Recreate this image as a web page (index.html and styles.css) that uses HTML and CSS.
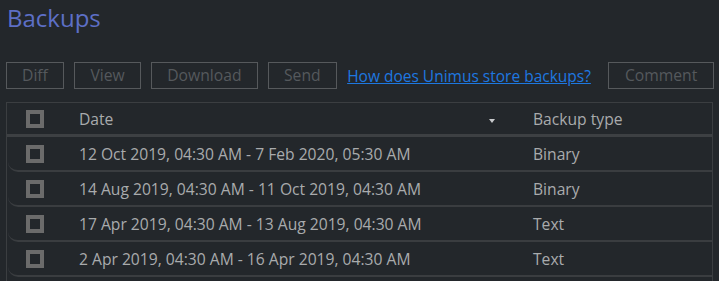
FILE: index.html
```html
<!DOCTYPE html>
<html>
<head>
<meta charset="utf-8">
<link rel="stylesheet" href="styles.css">
</head>
<body>
<div class="page">
  <h1 class="title">Backups</h1>
  <div class="toolbar">
    <button class="btn">Diff</button>
    <button class="btn">View</button>
    <button class="btn">Download</button>
    <button class="btn">Send</button>
    <a class="help" href="#">How does Unimus store backups?</a>
    <button class="btn btn-comment">Comment</button>
  </div>
  <div class="table">
    <div class="row head">
      <div class="cell cb"><span class="check"></span></div>
      <div class="cell date">Date<span class="caret"></span></div>
      <div class="cell type">Backup type</div>
    </div>
    <div class="row">
      <div class="cell cb"><span class="check"></span></div>
      <div class="cell date">12 Oct 2019, 04:30 AM - 7 Feb 2020, 05:30 AM</div>
      <div class="cell type">Binary</div>
    </div>
    <div class="row">
      <div class="cell cb"><span class="check"></span></div>
      <div class="cell date">14 Aug 2019, 04:30 AM - 11 Oct 2019, 04:30 AM</div>
      <div class="cell type">Binary</div>
    </div>
    <div class="row">
      <div class="cell cb"><span class="check"></span></div>
      <div class="cell date">17 Apr 2019, 04:30 AM - 13 Aug 2019, 04:30 AM</div>
      <div class="cell type">Text</div>
    </div>
    <div class="row">
      <div class="cell cb"><span class="check"></span></div>
      <div class="cell date">2 Apr 2019, 04:30 AM - 16 Apr 2019, 04:30 AM</div>
      <div class="cell type">Text</div>
    </div>
  </div>
</div>
</body>
</html>
```
FILE: styles.css
```css
html, body {
  margin: 0;
  padding: 0;
  background: #23272b;
  height: 100%;
  overflow: hidden;
}
.page {
  font-family: "Open Sans", "Noto Sans", sans-serif;
  padding: 0 6px 0 6px;
  width: 707px;
}
.title {
  margin: 0;
  padding: 0 0 0 1px;
  font-size: 24px;
  font-weight: 400;
  line-height: 36px;
  color: #5d6fc6;
}
.toolbar {
  display: flex;
  align-items: center;
  margin-top: 26px;
  height: 27px;
  white-space: nowrap;
}
.btn {
  font-family: "Open Sans", "Noto Sans", sans-serif;
  font-size: 15.7px;
  color: #55595d;
  background: transparent;
  border: 1px solid #56595c;
  height: 27px;
  padding: 0 15px;
  margin: 0 10.5px 0 0;
  line-height: 25px;
  flex-shrink: 0;
}
.help {
  font-size: 15.5px;
  color: #1e78e0;
  text-decoration: underline;
  margin-right: 17px;
  flex-shrink: 0;
}
.btn-comment {
  margin-right: 0;
  padding: 0 16px;
}
.table {
  margin-top: 13px;
  border: 1px solid #3b3e41;
  border-bottom: none;
  height: 200px;
}
.row {
  display: grid;
  grid-template-columns: 71px 454px 1fr;
  align-items: center;
  height: 33px;
  margin-left: 1px;
  border-bottom: 2px solid #3a3d40;
  border-bottom-left-radius: 10px;
  font-size: 15.65px;
  color: #a9abad;
}
.row.head {
  height: 31px;
  border-bottom: 3px solid #3d4043;
  border-bottom-left-radius: 0;
  margin-left: 0;
  padding-left: 1px;
}
.cell.cb {
  padding-left: 18px;
  display: flex;
}
.check {
  width: 10px;
  height: 10px;
  border: 4px solid #6b6b6b;
  display: block;
}
.date {
  display: flex;
  align-items: center;
}
.caret {
  margin-left: auto;
  margin-right: 38px;
  width: 0;
  height: 0;
  border-left: 3px solid transparent;
  border-right: 3px solid transparent;
  border-top: 4px solid #c8cacc;
  margin-top: 4px;
}
```
